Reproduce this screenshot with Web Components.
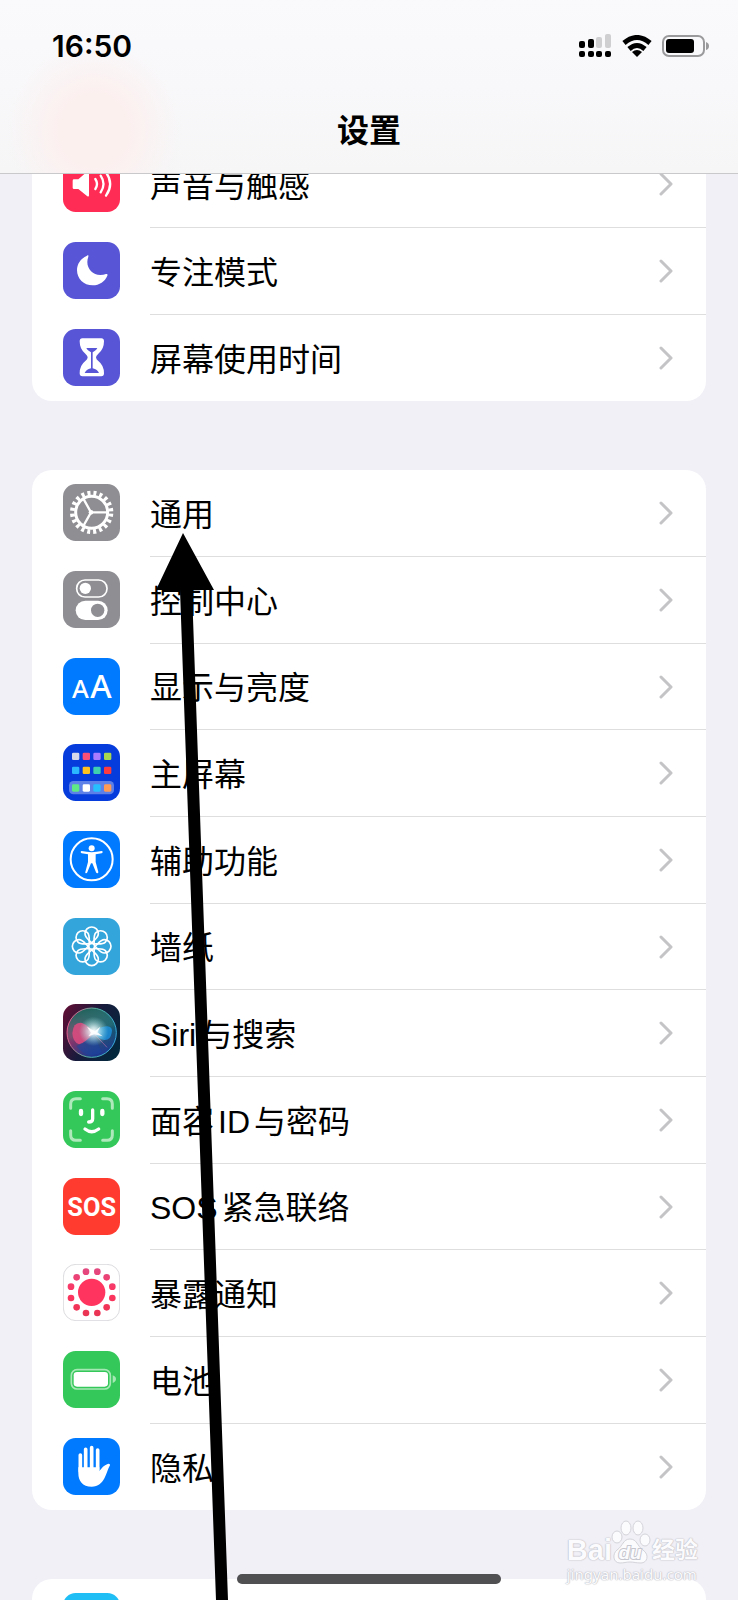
<!DOCTYPE html>
<html lang="zh-CN">
<head>
<meta charset="utf-8">
<meta name="viewport" content="width=device-width, initial-scale=1">
<title>设置</title>
<style>
  html, body { margin: 0; height: 100%; overflow: hidden; }
  body { background: #f1f0f7; color: #000; font-family: Inter, "Liberation Sans", "Noto Sans CJK SC", sans-serif; }
</style>
</head>
<body>
<settings-app>
  <settings-group>
    <settings-row icon="sound">声音与触感</settings-row>
    <settings-row icon="focus">专注模式</settings-row>
    <settings-row icon="time">屏幕使用时间</settings-row>
  </settings-group>
  <settings-group>
    <settings-row icon="general">通用</settings-row>
    <settings-row icon="control">控制中心</settings-row>
    <settings-row icon="display">显示与亮度</settings-row>
    <settings-row icon="home">主屏幕</settings-row>
    <settings-row icon="access">辅助功能</settings-row>
    <settings-row icon="wallpaper">墙纸</settings-row>
    <settings-row icon="siri">Siri与搜索</settings-row>
    <settings-row icon="face">面容ID与密码</settings-row>
    <settings-row icon="sos">SOS紧急联络</settings-row>
    <settings-row icon="exposure">暴露通知</settings-row>
    <settings-row icon="battery">电池</settings-row>
    <settings-row icon="privacy">隐私</settings-row>
  </settings-group>
  <settings-group>
    <settings-row icon="store"></settings-row>
  </settings-group>
</settings-app>
<pointer-arrow></pointer-arrow>
<home-indicator></home-indicator>
<page-watermark></page-watermark>

<script>
const range = n => Array.from({ length: n }, (_, i) => i);

const homeSquares = [
  ['#d5d9ea', '#fb4f78', '#a97bff', '#a8d650'],
  ['#2bb8ff', '#ffc21f', '#3fd0b0', '#fb3b3f'],
  ['#5fe886', '#ffffff', '#26c0ff', '#ff9a55']
].map((row, r) => row.map((c, i) =>
  `<rect x="${27 + 32 * i}" y="${[26, 68, 121][r]}" width="22" height="22" rx="4" fill="${c}"/>`).join('')).join('');

/* Each glyph is drawn on a 171-unit tile, three units to a pixel. */
const ICONS = {
  sound: ['#ff2d55', `<path fill="#fff" d="M33 73H46L72 50Q78 46 78 53V121Q78 127 72 123L46 102H33Q29 102 29 98V77Q29 73 33 73Z"/>
    <g fill="none" stroke="#fff" stroke-width="7" stroke-linecap="round"><path d="M97 72Q107 87 97 102"/><path d="M113 62Q130 87 113 112"/><path d="M129 52Q154 87 129 122"/></g>`],
  focus: ['#5856d6', `<path fill="#fff" d="M72 41C52 50 42 67 42 84C42 110 62 130 89 130C109 130 126 118 133 101C135 97 132 95 129 96C124 98 118 99 112 99C90 99 73 82 73 60C73 55 74 50 76 44C77 40 75 39 72 41Z"/>`],
  time: ['#5856d6', `<path fill="#fff" d="M58 28H115Q123 28 123 37Q123 61 106 74Q99 80 99 85Q99 91 106 96Q123 109 123 133Q123 142 115 142H58Q50 142 50 133Q50 109 67 96Q74 91 74 85Q74 80 67 74Q50 61 50 37Q50 28 58 28Z"/>
    <path fill="#5856d6" d="M70 57H103Q101 62 96 65L89 70V118Q104 122 108 132H65Q69 122 84 118V70L77 65Q72 62 70 57Z"/>`],
  general: ['#8e8e93', `<g fill="none" stroke="#fff" transform="rotate(4 86 85)"><circle cx="86" cy="85" r="58" stroke-width="14" pathLength="200" stroke-dasharray="5 5"/></g>
    <g fill="none" stroke="#fff"><circle cx="86" cy="85" r="48" stroke-width="9"/><path stroke-width="7" d="M84 85H133M84 85L61 44M84 85L61 126"/></g><circle cx="84" cy="85" r="7" fill="#fff"/>`],
  control: ['#8e8e93', `<rect x="41" y="27" width="91" height="51" rx="25" fill="none" stroke="#fff" stroke-width="5"/><circle cx="67" cy="52" r="17" fill="#fff"/>
    <rect x="38" y="89" width="96" height="58" rx="29" fill="#fff"/><circle cx="104" cy="118" r="20" fill="#8e8e93"/>`],
  display: ['#007aff', `<g fill="#fff" font-family="Noto Sans, sans-serif" font-weight="500"><text x="27" y="121" font-size="77">A</text><text x="82" y="121" font-size="98">A</text></g>`],
  home: ['#053cdb', `<rect x="18" y="111" width="135" height="40" rx="13" fill="#fff" fill-opacity=".35"/>${homeSquares}`],
  access: ['#007aff', `<circle cx="86" cy="85" r="63" fill="none" stroke="#fff" stroke-width="6"/><circle cx="86" cy="52" r="9" fill="#fff"/>
    <path fill="#fff" d="M56 60Q86 67 116 60Q119 60 119 63Q119 66 116 67L98 70V93L106 123Q106 127 103 127Q100 127 99 124L88 97H84L73 124Q72 127 69 127Q66 127 67 123L75 93V70L56 67Q53 66 53 63Q53 60 56 60Z"/>`],
  wallpaper: ['#34a5db', `<g fill="none" stroke="#fff" stroke-width="5">${range(8).map(i =>
    `<path transform="translate(86 85) rotate(${i * 45})" d="M0-10C-6-18-20-26-20-38A20 20 0 0 1 20-38C20-26 6-18 0-10Z"/>`).join('')}<circle cx="86" cy="85" r="9"/></g>`],
  siri: ['url(#sb)', `<defs>
      <linearGradient id="sb" x1="0" y1=".2" x2="1" y2=".7"><stop stop-color="#5a0f35"/><stop offset=".5" stop-color="#171b3c"/><stop offset="1" stop-color="#04283d"/></linearGradient>
      <linearGradient id="so" x1="0" y1=".6" x2="1" y2=".4"><stop stop-color="#a92a66"/><stop offset=".45" stop-color="#45566c"/><stop offset="1" stop-color="#0f5a72"/></linearGradient>
      <linearGradient id="sg" x1=".3" y1="0" x2=".6" y2="1"><stop stop-color="#1c5f58"/><stop offset=".48" stop-color="#3b8a80" stop-opacity=".3"/><stop offset=".6" stop-color="#1c3a85" stop-opacity=".2"/><stop offset="1" stop-color="#1c3796"/></linearGradient>
      <linearGradient id="sr" x1="0" y1=".4" x2="1" y2=".6"><stop stop-color="#e9588c"/><stop offset=".5" stop-color="#53b49d"/><stop offset="1" stop-color="#36a8dd"/></linearGradient>
      <radialGradient id="sw"><stop stop-color="#fff"/><stop offset=".3" stop-color="#eaffff" stop-opacity=".75"/><stop offset="1" stop-color="#8fe9e4" stop-opacity="0"/></radialGradient></defs>
    <circle cx="86" cy="86" r="74" fill="url(#so)"/><circle cx="86" cy="86" r="74" fill="url(#sg)"/>
    <path fill="#e04a80" fill-opacity=".85" d="M28 87Q31 53 57 57Q76 64 92 86Q75 113 48 121Q29 114 28 87Z"/>
    <path fill="#1d91df" fill-opacity=".8" d="M92 86Q113 65 134 67Q151 70 146 87Q142 110 123 108Q105 103 92 86Z"/>
    <path fill="#1b45a2" fill-opacity=".55" d="M40 127Q72 112 92 88L116 144Q73 169 40 127Z"/>
    <path fill="none" stroke="#b36aa8" stroke-width="2" d="M94 90L132 130"/>
    <circle cx="92" cy="82" r="44" fill="url(#sw)"/><path fill="#fff" fill-opacity=".9" d="M72 68L95 82L112 68L103 85L119 97L94 91L76 97L84 86Z"/>
    <circle cx="86" cy="86" r="74" fill="none" stroke="url(#sr)" stroke-width="3"/>`],
  face: ['#34c759', `<g fill="none" stroke-linecap="round"><path stroke="#aee9bc" stroke-width="9" d="M23 52V39Q23 23 39 23H52M119 23H132Q148 23 148 39V52M148 119V132Q148 148 132 148H119M52 148H39Q23 148 23 132V119"/>
    <path stroke="#fff" stroke-width="13" d="M54 60V69M118 60V69"/><path stroke="#fff" stroke-width="10" d="M89 57V83Q89 93 77 93M66 114Q86 130 107 114"/></g>`],
  sos: ['#ff3b30', `<text x="86" y="114" text-anchor="middle" fill="#fff" font-family="Roboto, sans-serif" font-weight="700" font-size="76">SOS</text>`],
  exposure: ['#fff', `<defs><linearGradient id="ex" gradientUnits="userSpaceOnUse" x1="0" y1="20" x2="0" y2="150"><stop stop-color="#e3487f"/><stop offset=".5" stop-color="#ff345f"/><stop offset="1" stop-color="#ea3555"/></linearGradient></defs>
    <rect x="1" y="1" width="169" height="169" rx="38" fill="none" stroke="#dcdce0" stroke-width="3"/><circle cx="86" cy="85" r="41" fill="#ff345f"/>
    <g fill="url(#ex)">${range(12).map(i => { const a = (15 + 30 * i) * Math.PI / 180; return `<circle cx="${Math.round(86 + 64 * Math.cos(a))}" cy="${Math.round(85 + 64 * Math.sin(a))}" r="10"/>`; }).join('')}</g>`],
  battery: ['#34c759', `<rect x="25" y="56" width="117" height="58" rx="17" fill="none" stroke="#a6e8b5" stroke-width="5"/><rect x="32" y="63" width="103" height="44" rx="10" fill="#fff"/><path fill="#a6e8b5" d="M149 73Q159 77 159 84Q159 92 149 96Z"/>`],
  privacy: ['#007aff', `<g fill="none" stroke="#fff" stroke-width="11" stroke-linecap="round"><path d="M52 51V100M68 34V95M86 29V95M104 36V95"/></g>
    <path fill="#fff" d="M46 88H109V99C116 91 123 81 134 78Q142 76 141 82C128 104 126 146 86 146C58 146 46 129 46 105Z"/>`],
  store: ['#1fbef5', '']
};

class BaseElement extends HTMLElement {
  connectedCallback() {
    if (!this.shadowRoot) this.attachShadow({ mode: 'open' }).innerHTML = this.render();
  }
}

customElements.define('settings-icon', class extends BaseElement {
  render() {
    const [fill, art] = ICONS[this.getAttribute('name')];
    return `<style>:host{display:block;width:57px;height:57px;flex:none}svg{display:block;width:100%;height:100%}</style>
      <svg viewBox="0 0 171 171" aria-hidden="true"><rect width="171" height="171" rx="38" fill="${fill}"/>${art}</svg>`;
  }
});

customElements.define('settings-row', class extends BaseElement {
  render() {
    return `<style>
      :host{display:block;height:87px}
      a{display:flex;gap:30px;height:100%;padding-left:31px;box-sizing:border-box;color:inherit;text-decoration:none}
      settings-icon{margin-top:14px}
      .body{flex:1;display:flex;align-items:center;justify-content:space-between;padding-right:33px;border-bottom:var(--line,1px solid #dededf)}
      .label{padding-top:3px;font-family:"Liberation Sans","Noto Sans CJK SC",sans-serif;font-size:32px;line-height:48px;text-autospace:normal}
      svg{display:block;width:14px;height:24px}
      </style>
      <a href="#${this.getAttribute('icon')}"><settings-icon name="${this.getAttribute('icon')}"></settings-icon>
      <span class="body"><span class="label"><slot></slot></span>
      <svg viewBox="0 0 14 24" aria-hidden="true"><path d="M2 2L12 12L2 22" fill="none" stroke="#c4c4c7" stroke-width="3" stroke-linecap="round" stroke-linejoin="round"/></svg></span></a>`;
  }
});

customElements.define('settings-group', class extends BaseElement {
  render() {
    return `<style>
      :host{display:block;background:#fff;border-radius:20px;overflow:hidden}
      ::slotted(:nth-child(3n)){height:86px}
      ::slotted(:last-child){--line:0}
      </style><slot></slot>`;
  }
});

customElements.define('status-bar', class extends BaseElement {
  render() {
    return `<style>
      :host{display:flex;justify-content:space-between;align-items:center;height:92px;padding:0 29px 0 52px}
      time{font-size:30px;font-weight:600;line-height:36px}
      .icons{display:flex;gap:10px;align-items:center}
      svg{display:block}
      </style>
      <time>16:50</time>
      <span class="icons">
        <svg width="33" height="24" viewBox="0 0 33 24"><g><rect y="7" width="6" height="7" rx="2"/><rect x="9" y="5" width="6" height="9" rx="2"/><rect x="17" y="3" width="6" height="11" rx="2" fill="#cfcfd1"/><rect x="26" y="0" width="6" height="14" rx="2" fill="#cfcfd1"/><rect y="17" width="6" height="6" rx="2"/><rect x="9" y="17" width="6" height="6" rx="2"/><rect x="17" y="17" width="6" height="6" rx="2"/><rect x="26" y="17" width="6" height="6" rx="2"/></g></svg>
        <svg width="30" height="22" viewBox="0 0 30 22"><g fill="none" stroke="#000" stroke-width="5"><path d="M2 8Q15-3 28 8"/><path d="M7 14Q15 7 23 14"/></g><path d="M10 17Q15 13 20 17L15 22Z"/></svg>
        <svg width="47" height="22" viewBox="0 0 47 22"><rect x="1" y="1" width="41" height="20" rx="6" fill="none" stroke="#9a9a9d" stroke-width="2"/><rect x="4" y="4" width="28" height="14" rx="3"/><path d="M44 7Q47 8 47 11Q47 14 44 15Z" fill="#9a9a9d"/></svg>
      </span>`;
  }
});

customElements.define('nav-bar', class extends BaseElement {
  render() {
    return `<style>
      :host{display:block;box-sizing:border-box;height:174px;border-bottom:1px solid #c9c9cc;
        background:radial-gradient(ellipse 88px 92px at 94px 130px,#fcf0ee 0,#fcf0ef 40%,#fcf0ef00 100%),linear-gradient(#fafafd,#f6f6f7)}
      h1{margin:0;padding-top:15px;text-align:center;font-size:32px;line-height:48px;font-weight:700}
      </style><status-bar></status-bar><h1><slot></slot></h1>`;
  }
});

customElements.define('settings-app', class extends BaseElement {
  render() {
    return `<style>
      :host{display:block;height:100vh;overflow:hidden;position:relative}
      nav-bar{position:absolute;top:0;left:0;right:0;z-index:1}
      main{display:flex;flex-direction:column;gap:69px;padding:141px 32px 0}
      </style><nav-bar>设置</nav-bar><main><slot></slot></main>`;
  }
});

customElements.define('pointer-arrow', class extends BaseElement {
  render() {
    return `<style>:host{display:block;position:absolute;left:156px;top:533px;pointer-events:none}svg{display:block}</style>
      <svg width="74" height="1067" viewBox="0 0 74 1067" aria-hidden="true"><path d="M27 0L58 57H36L72 1067H60L24 57H0Z"/></svg>`;
  }
});

customElements.define('home-indicator', class extends BaseElement {
  render() {
    return `<style>:host{display:flex;justify-content:center;position:absolute;left:0;right:0;bottom:16px;pointer-events:none}i{width:264px;height:10px;border-radius:5px;background:#505053}</style><i></i>`;
  }
});

customElements.define('page-watermark', class extends BaseElement {
  render() {
    return `<style>
      :host{display:block;position:absolute;right:40px;bottom:16px;color:#fbfbfd;pointer-events:none;font-family:"Liberation Sans","Noto Sans CJK SC",sans-serif;
        text-shadow:0 0 1px #bdbdc4,0 0 1px #bdbdc4,0 0 2px #d0d0d6}
      .logo{display:flex;align-items:flex-end;height:44px;font-weight:700}
      .bai{font-size:29px;line-height:28px}
      .exp{font-size:23px;line-height:28px;margin-left:2px}
      svg{display:block;overflow:visible}
      .url{font-family:"Noto Sans",sans-serif;font-size:15px;line-height:20px}
      </style>
      <div class="logo"><span class="bai">Bai</span>
      <svg width="38" height="44" viewBox="0 0 38 44"><g fill="#fbfbfd" stroke="#d3d3da"><ellipse cx="5" cy="17" rx="5" ry="6"/><ellipse cx="14" cy="8" rx="5" ry="7"/><ellipse cx="26" cy="8" rx="5" ry="7"/><ellipse cx="33" cy="20" rx="5" ry="6"/><path d="M18 19C25 19 25 26 31 30C38 35 35 43 29 43C24 43 22 42 18 42C14 42 12 43 8 43C1 43 0 34 5 30C11 26 11 19 18 19Z"/></g><text x="18" y="39" text-anchor="middle" font-size="19" font-style="italic" fill="#fbfbfd" stroke="#c6c6ce" stroke-width="2" paint-order="stroke" style="text-shadow:none">du</text></svg>
      <span class="exp">经验</span></div>
      <div class="url">jingyan.baidu.com</div>`;
  }
});
</script>
</body>
</html>
